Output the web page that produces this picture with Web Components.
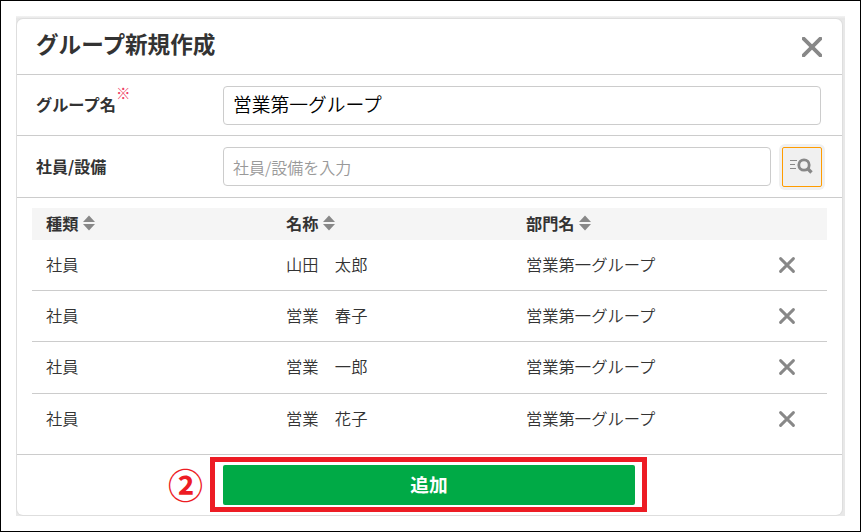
<!DOCTYPE html>
<html lang="ja">
<head>
<meta charset="utf-8">
<title>グループ新規作成</title>
<style>
  html, body { margin: 0; height: 100%; }
  body {
    box-sizing: border-box;
    border: 1px solid #000;
    padding: 15px;
    background: #fff;
    color: #333;
    font: 16.2px/24px "Noto Sans CJK JP", sans-serif;
    overflow: hidden;
  }
</style>
</head>
<body>
<group-dialog heading="グループ新規作成">
  <form-row label="グループ名" required>
    <text-field value="営業第一グループ"></text-field>
  </form-row>
  <form-row label="社員/設備" class="member">
    <text-field placeholder="社員/設備を入力"></text-field>
    <search-button></search-button>
  </form-row>
  <member-table>
    <member-row kind="社員" name="山田　太郎" section="営業第一グループ"></member-row>
    <member-row kind="社員" name="営業　春子" section="営業第一グループ"></member-row>
    <member-row kind="社員" name="営業　一郎" section="営業第一グループ" class="tall"></member-row>
    <member-row kind="社員" name="営業　花子" section="営業第一グループ"></member-row>
  </member-table>
  <submit-button slot="footer">追加</submit-button>
</group-dialog>

<script>
class CloseIcon extends HTMLElement {
  constructor() {
    super();
    this.attachShadow({ mode: "open" });
  }

  connectedCallback() {
    const size = this.getAttribute("size") || "16";
    const weight = this.getAttribute("weight") || "2.9";
    const end = size - 1.6;
    this.shadowRoot.innerHTML = `
      <style>
        :host { display: block; width: ${size}px; height: ${size}px; }
        svg { display: block; }
      </style>
      <svg width="${size}" height="${size}" fill="none" stroke="#888" stroke-width="${weight}" stroke-linecap="round">
        <path d="M1.6 1.6L${end} ${end}M${end} 1.6L1.6 ${end}"/>
      </svg>
    `;
  }
}

class GroupDialog extends HTMLElement {
  constructor() {
    super();
    this.attachShadow({ mode: "open" });
  }

  connectedCallback() {
    this.shadowRoot.innerHTML = `
      <style>
        :host {
          display: block;
          box-sizing: border-box;
          width: 829px;
          height: 500px;
          padding: 3px 3px 1px 1px;
          background: linear-gradient(#f3f3f3, #e4e4e4 3px, #e8e8e8 4px);
        }
        .card {
          display: flex;
          flex-direction: column;
          height: 496px;
          background: #fff;
          border-radius: 6px;
          box-shadow: 0 0 0 1px #dedede;
        }
        header {
          box-sizing: border-box;
          display: flex;
          justify-content: space-between;
          align-items: center;
          height: 56px;
          padding: 0 20px 0 19px;
          border-bottom: 1px solid #ccc;
        }
        h1 { margin: 0 0 5px; font-size: 22.6px; line-height: 32px; }
        footer {
          display: flex;
          flex: 1;
          align-items: center;
          padding: 0 0 2px 151px;
          border-top: 1px solid #ccc;
        }
      </style>
      <div class="card">
        <header>
          <h1>${this.getAttribute("heading")}</h1>
          <close-icon size="20" weight="3.8"></close-icon>
        </header>
        <slot></slot>
        <footer><slot name="footer"></slot></footer>
      </div>
    `;
  }
}

class FormRow extends HTMLElement {
  constructor() {
    super();
    this.attachShadow({ mode: "open" });
  }

  connectedCallback() {
    const mark = this.hasAttribute("required") ? "<sup>※</sup>" : "";
    this.shadowRoot.innerHTML = `
      <style>
        :host {
          box-sizing: border-box;
          display: grid;
          grid-template-columns: 187px 1fr;
          align-items: center;
          height: 61px;
          padding: 0 21px 0 19px;
          border-bottom: 1px solid #ccc;
        }
        :host(.member) { height: 62px; padding-right: 17px; }
        .label { display: flex; margin-bottom: 2px; font-weight: bold; }
        :host(.member) .label { font-size: 16px; }
        sup {
          margin: -9px 0 0;
          color: #ee3e64;
          font-size: 14.5px;
          font-weight: normal;
          line-height: 20px;
        }
        .field { display: flex; align-items: center; gap: 8px; }
      </style>
      <div class="label">${this.getAttribute("label")}${mark}</div>
      <div class="field"><slot></slot></div>
    `;
  }
}

class TextField extends HTMLElement {
  constructor() {
    super();
    this.attachShadow({ mode: "open" });
  }

  connectedCallback() {
    const value = this.getAttribute("value");
    this.shadowRoot.innerHTML = `
      <style>
        :host {
          box-sizing: border-box;
          display: flex;
          flex: 1;
          height: 39px;
          padding: 0 9px;
          border: 1px solid #ccc;
          border-radius: 4px;
          font-weight: 350;
        }
        .value { color: #000; font-size: 18.75px; line-height: 33px; }
        .placeholder { color: #999; font-size: 16px; line-height: 38px; }
      </style>
      <span class="${value ? "value" : "placeholder"}">${value || this.getAttribute("placeholder")}</span>
    `;
  }
}

class SearchButton extends HTMLElement {
  constructor() {
    super();
    this.attachShadow({ mode: "open" });
    this.shadowRoot.innerHTML = `
      <style>
        :host {
          display: block;
          padding: 3px;
          border-radius: 6px;
          background: #f0f0f0;
        }
        .box {
          box-sizing: border-box;
          width: 40px;
          height: 40px;
          border: 1px solid #ff9c00;
          border-radius: 2px;
        }
        svg { display: block; }
      </style>
      <div class="box">
        <svg width="38" height="38" fill="none" stroke="#888">
          <path d="M7 12.5h7M7 16.5h5M7 20.5h6" stroke-width="1"/>
          <circle cx="21" cy="17" r="5.2" stroke-width="2.8"/>
          <path d="M24.5 20.5l4 4" stroke-width="3.4"/>
        </svg>
      </div>
    `;
  }
}

class MemberTable extends HTMLElement {
  constructor() {
    super();
    this.attachShadow({ mode: "open" });
    const sort = `
      <svg width="12" height="16" fill="#888">
        <path d="M6 0.5L12 7H0zM0 9h12L6 15.5z"/>
      </svg>`;
    this.shadowRoot.innerHTML = `
      <style>
        :host {
          box-sizing: border-box;
          display: block;
          height: 256px;
          padding: 10px 15px 0;
        }
        .head {
          display: grid;
          grid-template-columns: 240px 240px 1fr;
          height: 32px;
          padding-left: 14px;
          background: #f5f5f5;
          font-weight: bold;
        }
        .head div { display: flex; align-items: center; gap: 4.6px; padding-bottom: 2px; }
        svg { display: block; }
      </style>
      <div class="head">
        <div>種類${sort}</div>
        <div>名称${sort}</div>
        <div>部門名${sort}</div>
      </div>
      <slot></slot>
    `;
  }
}

class MemberRow extends HTMLElement {
  constructor() {
    super();
    this.attachShadow({ mode: "open" });
  }

  connectedCallback() {
    this.shadowRoot.innerHTML = `
      <style>
        :host {
          box-sizing: border-box;
          display: grid;
          grid-template-columns: 240px 240px 1fr auto;
          align-items: center;
          height: 51px;
          padding: 0 32px 0 14px;
          border-bottom: 1px solid #ccc;
          font-weight: 350;
        }
        :host(.tall) { height: 52px; padding-bottom: 1px; }
        :host(:last-of-type) { border-color: transparent; }
        span { padding-bottom: 2px; font-size: 16.3px; }
      </style>
      <span>${this.getAttribute("kind")}</span>
      <span>${this.getAttribute("name")}</span>
      <span>${this.getAttribute("section")}</span>
      <close-icon></close-icon>
    `;
  }
}

class SubmitButton extends HTMLElement {
  constructor() {
    super();
    this.attachShadow({ mode: "open" });
    this.shadowRoot.innerHTML = `
      <style>
        :host { display: flex; align-items: center; }
        .step {
          width: 42px;
          color: #ed1c24;
          font-size: 35px;
          font-weight: bold;
          line-height: 50px;
        }
        .frame {
          box-sizing: border-box;
          width: 437px;
          height: 55px;
          padding: 3px 7px 2px 8px;
          border: 5px solid #ed1c24;
        }
        .button {
          height: 40px;
          border-radius: 2px;
          background: #00aa46;
          color: #fff;
          font-size: 18.7px;
          font-weight: bold;
          line-height: 37px;
          text-align: center;
        }
      </style>
      <span class="step">②</span>
      <div class="frame"><div class="button"><slot></slot></div></div>
    `;
  }
}

customElements.define("close-icon", CloseIcon);
customElements.define("group-dialog", GroupDialog);
customElements.define("form-row", FormRow);
customElements.define("text-field", TextField);
customElements.define("search-button", SearchButton);
customElements.define("member-table", MemberTable);
customElements.define("member-row", MemberRow);
customElements.define("submit-button", SubmitButton);
</script>
</body>
</html>
